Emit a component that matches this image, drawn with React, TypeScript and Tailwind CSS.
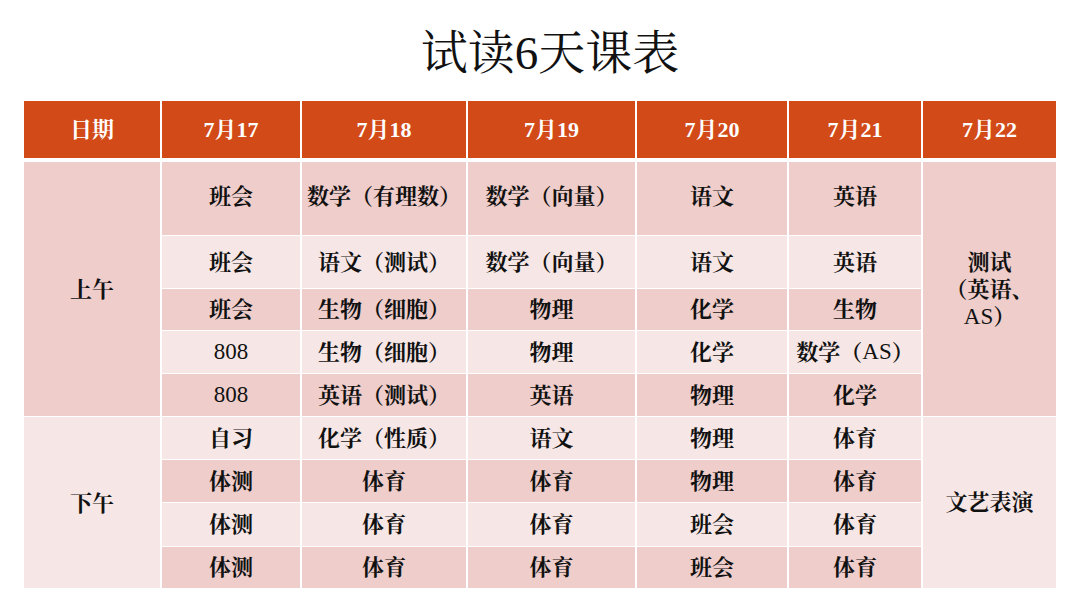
import React from "react";

const FONT = '"Liberation Serif", "Noto Serif CJK SC", "Noto Sans CJK SC", serif';

const DARK = "bg-[#eecdcb]";
const LIGHT = "bg-[#f6e7e6]";

type Cell = string;

const rows: { cells: Cell[]; dark: boolean }[] = [
  { cells: ["班会", "数学（有理数）", "数学（向量）", "语文", "英语"], dark: true },
  { cells: ["班会", "语文（测试）", "数学（向量）", "语文", "英语"], dark: false },
  { cells: ["班会", "生物（细胞）", "物理", "化学", "生物"], dark: true },
  { cells: ["808", "生物（细胞）", "物理", "化学", "数学（AS）"], dark: false },
  { cells: ["808", "英语（测试）", "英语", "物理", "化学"], dark: true },
  { cells: ["自习", "化学（性质）", "语文", "物理", "体育"], dark: false },
  { cells: ["体测", "体育", "体育", "物理", "体育"], dark: true },
  { cells: ["体测", "体育", "体育", "班会", "体育"], dark: false },
  { cells: ["体测", "体育", "体育", "班会", "体育"], dark: true },
];

function renderText(t: string) {
  const parts = t.split(/([A-Za-z0-9]+)/).filter((p) => p.length > 0);
  return parts.map((p, i) =>
    /^[A-Za-z0-9]+$/.test(p) ? (
      <span key={i} className="font-normal text-[23px]">
        {p}
      </span>
    ) : (
      <span key={i}>{p}</span>
    )
  );
}

const COLS = "grid-cols-[136px_138px_164px_167px_150px_132px_133px]";

export default function App() {
  return (
    <div
      className="w-[1080px] h-[597px] bg-white overflow-hidden"
      style={{ fontFamily: FONT }}
    >
      <div className="h-[101px] flex items-center justify-center pt-[6px] pl-[20px]">
        <h1 className="text-[47px] leading-none font-normal text-[#111]">
          试读6天课表
        </h1>
      </div>

      <div className="px-[24px]">
        {/* header */}
        <div className={`grid ${COLS} gap-x-[2px] h-[57px] bg-white`}>
          {["日期", "7月17", "7月18", "7月19", "7月20", "7月21", "7月22"].map((h) => (
            <div
              key={h}
              className="bg-[#d24a18] text-white font-bold text-[22px] flex items-center justify-center"
            >
              {h}
            </div>
          ))}
        </div>

        {/* body */}
        <div
          className={`grid ${COLS} grid-rows-[73px_52px_41px_42px_42px_42px_42px_43px_41px] gap-x-[2px] gap-y-px mt-[4px] bg-white text-[22px] font-bold text-[#111]`}
        >
          <div className={`${DARK} row-start-1 row-span-5 col-start-1 flex items-center justify-center`}>
            上午
          </div>
          <div className={`${LIGHT} row-start-6 row-span-4 col-start-1 flex items-center justify-center pt-[2px]`}>
            下午
          </div>
          <div
            className={`${DARK} row-start-1 row-span-5 col-start-7 flex flex-col items-center justify-center leading-[27px]`}
          >
            <span>测试</span>
            <span>（英语、</span>
            <span>
              <span className="font-normal text-[23px]">AS</span>）
            </span>
          </div>
          <div className={`${LIGHT} row-start-6 row-span-4 col-start-7 flex items-center justify-center`}>
            文艺表演
          </div>

          {rows.map((r, ri) =>
            r.cells.map((c, ci) => (
              <div
                key={`${ri}-${ci}`}
                className={`${r.dark ? DARK : LIGHT} flex items-center justify-center whitespace-nowrap ${
                  ri === 0 ? "pb-[4px]" : ""
                }`}
                style={{ gridRowStart: ri + 1, gridColumnStart: ci + 2 }}
              >
                {renderText(c)}
              </div>
            ))
          )}
        </div>
      </div>
    </div>
  );
}
